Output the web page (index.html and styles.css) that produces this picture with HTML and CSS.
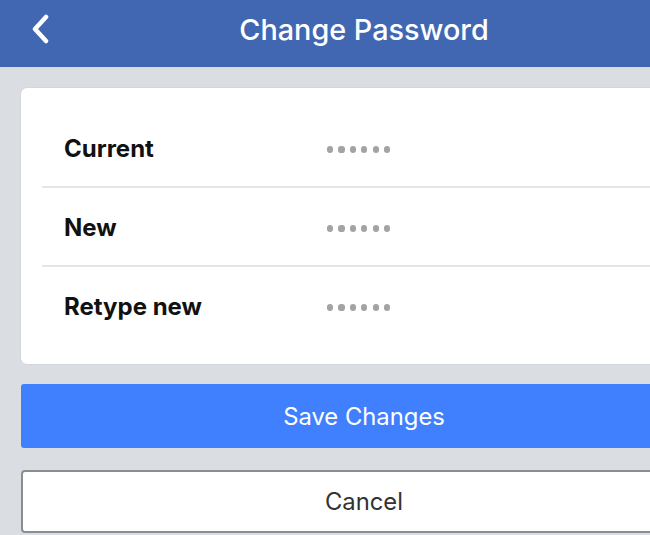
FILE: index.html
```html
<!DOCTYPE html>
<html>
<head>
<meta charset="utf-8">
<link rel="stylesheet" href="styles.css">
</head>
<body>
<div class="page">
  <header class="topbar">
    <div class="back">
      <svg width="20" height="30" viewBox="0 0 20 30"><path d="M16 3 L5 15 L16 27" fill="none" stroke="#fff" stroke-width="4.5" stroke-linecap="round" stroke-linejoin="round"/></svg>
    </div>
    <h1 class="title">Change Password</h1>
    <div></div>
  </header>
  <main class="content">
    <section class="card">
      <div class="row"><span class="label">Current</span><span class="dots"><i></i><i></i><i></i><i></i><i></i><i></i></span></div>
      <div class="row"><span class="label">New</span><span class="dots"><i></i><i></i><i></i><i></i><i></i><i></i></span></div>
      <div class="row"><span class="label">Retype new</span><span class="dots"><i></i><i></i><i></i><i></i><i></i><i></i></span></div>
    </section>
    <button class="btn btn-save">Save Changes</button>
    <button class="btn btn-cancel">Cancel</button>
  </main>
</div>
</body>
</html>
```
FILE: styles.css
```css
html, body {
  margin: 0;
  padding: 0;
  overflow: hidden;
  background: #dadde1;
}
.page {
  width: 728px;
  font-family: Inter, "Liberation Sans", sans-serif;
}
.topbar {
  height: 67px;
  background: #4267b2;
  display: grid;
  grid-template-columns: 1fr auto 1fr;
  align-items: center;
}
.back {
  padding-left: 30px;
  display: flex;
  align-items: center;
  height: 30px;
  margin-top: -10px;
}
.title {
  margin: 0;
  margin-top: -9px;
  color: #fff;
  font-size: 28.8px;
  font-weight: 500;
  letter-spacing: 0;
}
.content {
  padding: 21px 21px 0 21px;
  display: flex;
  flex-direction: column;
}
.card {
  background: #fff;
  border-radius: 6px;
  box-shadow: 0 0 0 1px #d3d6da;
  padding: 21px 0 20px 21px;
}
.row {
  height: 77px;
  display: flex;
  align-items: center;
  border-bottom: 2px solid #e4e5e7;
}
.row:last-child {
  border-bottom: none;
}
.label {
  width: 285px;
  padding-left: 22px;
  box-sizing: border-box;
  font-size: 24px;
  font-weight: 700;
  color: #111;
  margin-top: 1px;
}
.dots {
  display: flex;
  gap: 5.2px;
  margin-top: 4px;
}
.dots i {
  width: 6.2px;
  height: 6.2px;
  border-radius: 50%;
  background: #a3a3a3;
}
.btn {
  display: block;
  width: 100%;
  font-family: Inter, "Liberation Sans", sans-serif;
  font-size: 23.8px;
  font-weight: 400;
  border-radius: 3px;
  cursor: pointer;
}
.btn-save {
  margin-top: 20px;
  height: 64px;
  background: #4080ff;
  color: #fff;
  border: none;
}
.btn-cancel {
  margin-top: 22px;
  height: 63px;
  background: #fff;
  color: #333;
  border: 2px solid #8a8d92;
  border-radius: 4px;
}
```
